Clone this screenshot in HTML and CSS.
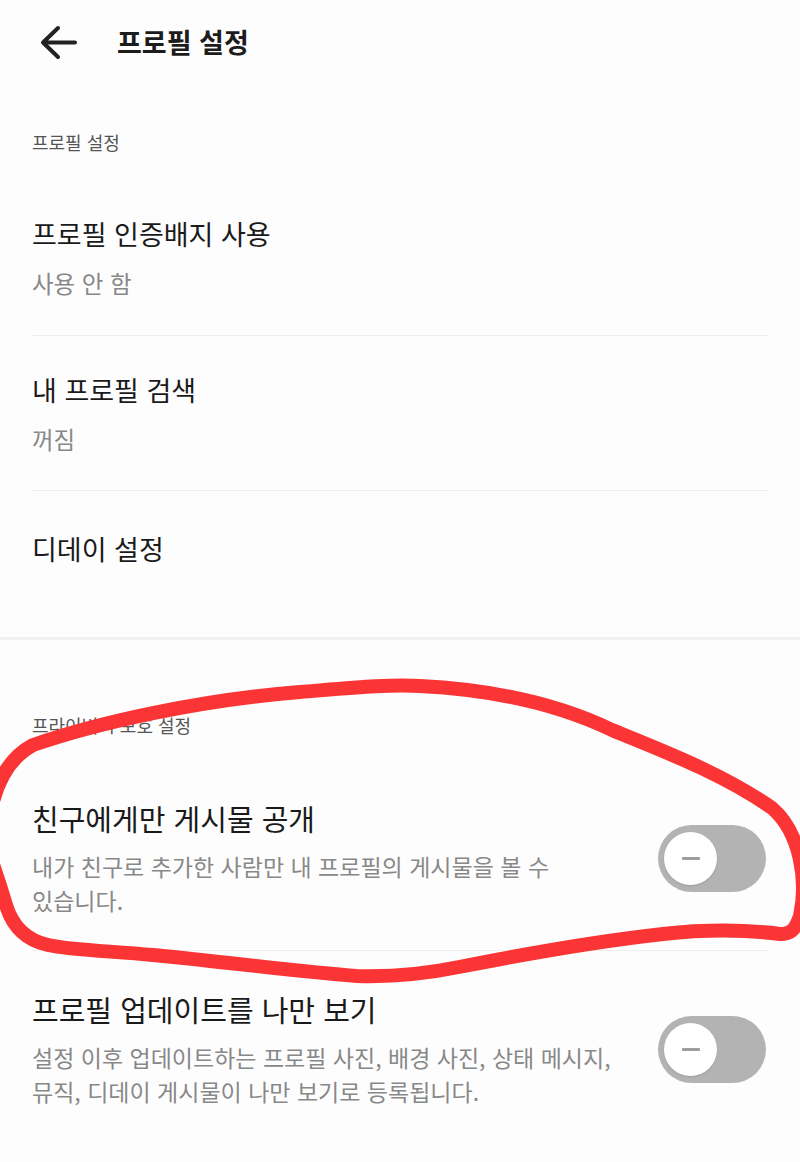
FILE: index.html
```html
<!DOCTYPE html>
<html lang="ko">
<head>
<meta charset="utf-8">
<title>프로필 설정</title>
<link rel="stylesheet" href="styles.css">
</head>
<body>
<div class="page">
  <header class="appbar">
    <svg class="back" width="37" height="35" viewBox="0 0 37 35" aria-hidden="true">
      <path d="M3 17.5 H35 M18 3 L3 17.5 L18 32" fill="none" stroke="#222" stroke-width="4" stroke-linecap="round" stroke-linejoin="round"/>
    </svg>
    <h1 class="appbar-title">프로필 설정</h1>
  </header>

  <section class="group group-first">
    <div class="group-label">프로필 설정</div>
    <div class="item item-1">
      <div class="item-title">프로필 인증배지 사용</div>
      <div class="item-sub">사용 안 함</div>
    </div>
    <div class="divider"></div>
    <div class="item item-2">
      <div class="item-title">내 프로필 검색</div>
      <div class="item-sub">꺼짐</div>
    </div>
    <div class="divider"></div>
    <div class="item item-3">
      <div class="item-title">디데이 설정</div>
    </div>
  </section>

  <div class="thick-divider"></div>

  <section class="group group-second">
    <div class="group-label">프라이버시 보호 설정</div>
    <div class="toggle-item toggle-item-1">
      <div class="toggle-text">
        <div class="toggle-title">친구에게만 게시물 공개</div>
        <div class="toggle-desc">내가 친구로 추가한 사람만 내 프로필의 게시물을 볼 수 있습니다.</div>
      </div>
      <div class="switch"><div class="knob"><span class="minus"></span></div></div>
    </div>
    <div class="divider"></div>
    <div class="toggle-item toggle-item-2">
      <div class="toggle-text">
        <div class="toggle-title">프로필 업데이트를 나만 보기</div>
        <div class="toggle-desc">설정 이후 업데이트하는 프로필 사진, 배경 사진, 상태 메시지, 뮤직, 디데이 게시물이 나만 보기로 등록됩니다.</div>
      </div>
      <div class="switch"><div class="knob"><span class="minus"></span></div></div>
    </div>
  </section>

  <svg class="annotation" width="800" height="1162" viewBox="0 0 800 1162" aria-hidden="true">
    <path d="M -12 830 C -8 790, 5 760, 33 745 C 100 722, 200 700, 300 692 C 350 688, 390 684, 420 686 C 500 690, 560 705, 612 730 C 660 750, 720 772, 772 808 C 800 832, 808 880, 800 916 C 795 931, 790 934, 780 934 C 740 929, 700 930, 663 934 C 600 941, 520 955, 459 967 C 420 975, 390 977, 357 976 C 300 972, 200 959, 153 955 C 110 951, 70 950, 48 945 C 25 940, 12 925, 6 905 C 0 885, -5 870, -12 850" fill="none" stroke="#fb3535" stroke-width="14" stroke-linecap="round" stroke-linejoin="round"/>
  </svg>
</div>
</body>
</html>
```

FILE: styles.css
```css
* { box-sizing: border-box; }

html, body {
  margin: 0;
  padding: 0;
  background: #fdfdfd;
}

body {
  font-family: "Noto Sans CJK KR", "Noto Sans", "Liberation Sans", sans-serif;
  color: #1a1a1a;
  word-break: keep-all;
}

.page {
  position: relative;
  width: 800px;
  height: 1162px;
  overflow: hidden;
}

.appbar {
  height: 84px;
  display: flex;
  align-items: center;
  padding-left: 40px;
  gap: 40px;
}

.back { display: block; flex: none; }

.appbar-title {
  margin: 0;
  font-size: 27px;
  font-weight: 700;
  line-height: 36px;
  color: #1c1c1c;
}

.group { padding: 0 32px; }

.group-label {
  font-size: 18px;
  line-height: 24px;
  color: #555;
}

.group-first .group-label { margin-top: 46px; }

.item-title {
  font-size: 27px;
  line-height: 36px;
  color: #1a1a1a;
}

.item-sub {
  margin-top: 16px;
  font-size: 23.5px;
  line-height: 30px;
  color: #888;
}

.item-1 { padding: 62px 0 37px; }
.item-2 { padding: 36px 0 36px; }
.item-3 { padding: 40px 0 70px; }

.divider {
  height: 1px;
  background: #efefef;
}

.thick-divider {
  height: 3px;
  background: #f1f1f1;
}

.group-second .group-label { margin-top: 73px; }

.toggle-item {
  display: flex;
  align-items: center;
}

.toggle-item-1 { padding: 62px 0 33px; }
.toggle-item-2 { padding: 39px 0 40px; }

.toggle-text {
  width: 582px;
  flex: none;
}

.toggle-title {
  font-size: 29px;
  line-height: 38px;
  color: #1a1a1a;
}

.toggle-desc {
  margin-top: 12px;
  font-size: 23px;
  line-height: 34px;
  color: #888;
}

.switch {
  margin-left: 44px;
  width: 108px;
  height: 67px;
  border-radius: 34px;
  background: #b3b3b3;
  padding: 7px 6px;
  flex: none;
}

.knob {
  width: 53px;
  height: 53px;
  border-radius: 50%;
  background: #fff;
  box-shadow: 0 1px 2px rgba(0,0,0,0.12);
  display: flex;
  align-items: center;
  justify-content: center;
}

.minus {
  display: block;
  width: 18px;
  height: 3px;
  border-radius: 1px;
  background: #9d9d9d;
}

.annotation {
  position: absolute;
  left: 0;
  top: 0;
  pointer-events: none;
}
```
